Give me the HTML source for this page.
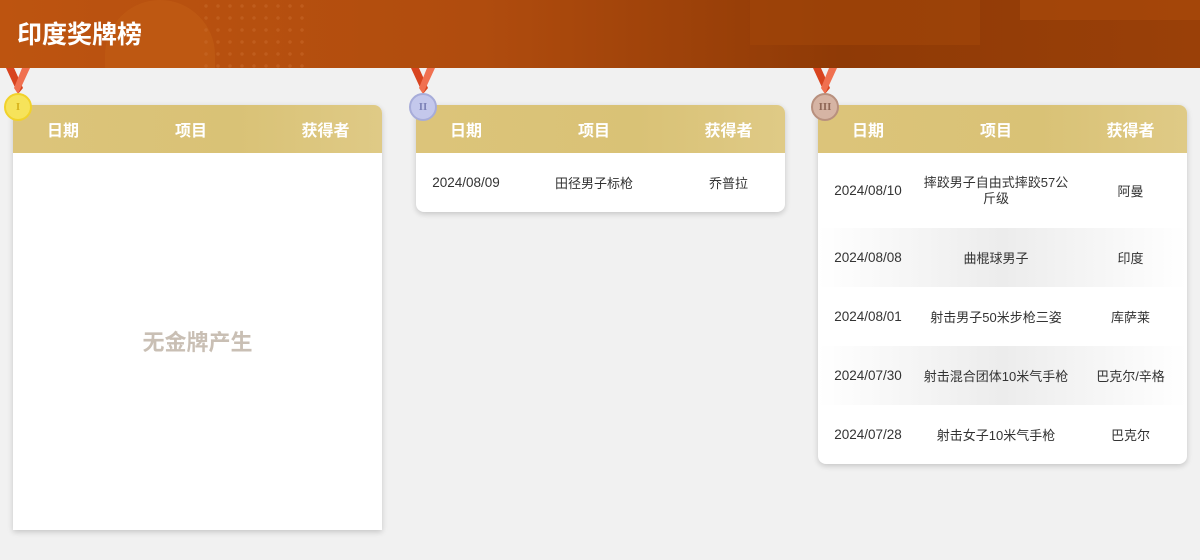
<!DOCTYPE html>
<html><head><meta charset="utf-8"><style>
*{margin:0;padding:0;box-sizing:border-box}
body{width:1200px;height:560px;background:#f1f1f1;font-family:"Liberation Sans","Noto Sans CJK SC",sans-serif;position:relative;overflow:hidden}
.top{position:absolute;left:0;top:0;width:1200px;height:68px;background:linear-gradient(90deg,#bd5410 0%,#b04c0e 40%,#8f3a06 70%,#9a4008 100%);overflow:hidden}
.top h1{position:absolute;left:17px;top:15px;color:#fff;font-size:25px;font-weight:bold;letter-spacing:0px}
.shape{position:absolute}
.card{position:absolute;width:369px;background:#fff;border-radius:8px;box-shadow:0 2px 6px rgba(0,0,0,.18);z-index:1}
.hd{height:48px;background:linear-gradient(90deg,#dcc47a,#d9c276 60%,#dfca86);border-radius:8px 8px 0 0;display:flex;align-items:center;color:#fff;font-weight:bold;font-size:16px}
.c1{width:100px;text-align:center}.c2{width:156px;text-align:center}.c3{width:113px;text-align:center}
.row{display:flex;align-items:center;height:59px;font-size:13.5px;color:#333}
.row .c2,.row .c3{font-size:13px}
.row.alt{background:linear-gradient(90deg,#fff,#ececec 50%,#fff)}
.medal{position:absolute;width:28px;height:28px;border-radius:50%;font-size:11px;font-weight:bold;text-align:center;line-height:24px;font-family:"Liberation Serif",serif;z-index:3}
.rib{position:absolute;top:68px;width:26px;height:30px;z-index:2}
</style></head><body>
<div class="top">
<div class="shape" style="left:105px;top:0;width:110px;height:120px;border-radius:55px;background:#c25d14;opacity:.6"></div>
<div class="shape" style="left:200px;top:0;width:110px;height:68px;background:radial-gradient(circle,#c86a2a 1.5px,transparent 2px) 0 0/12px 12px;opacity:.5"></div>
<div class="shape" style="left:750px;top:0;width:230px;height:45px;background:#a04508;opacity:.7"></div>
<div class="shape" style="left:1020px;top:0;width:180px;height:20px;background:#a8480a;opacity:.7"></div>
<h1>印度奖牌榜</h1></div>

<svg class="rib" style="left:5px" viewBox="0 0 26 30"><path d="M1 0 L13 26 L18 20 L9 0Z" fill="#d8441f"/><path d="M25 0 L13 26 L9 20 L17 0Z" fill="#f07050"/></svg>
<div class="medal" style="left:4px;top:93px;background:#f6e35a;border:2px solid #f1d22a;color:#d7b21a">I</div>
<svg class="rib" style="left:410px" viewBox="0 0 26 30"><path d="M1 0 L13 26 L18 20 L9 0Z" fill="#d8441f"/><path d="M25 0 L13 26 L9 20 L17 0Z" fill="#f07050"/></svg>
<div class="medal" style="left:409px;top:93px;background:#c4c8ec;border:2px solid #a7acd9;color:#7d82b8">II</div>
<svg class="rib" style="left:812px" viewBox="0 0 26 30"><path d="M1 0 L13 26 L18 20 L9 0Z" fill="#d8441f"/><path d="M25 0 L13 26 L9 20 L17 0Z" fill="#f07050"/></svg>
<div class="medal" style="left:811px;top:93px;background:#d6b4a4;border:2px solid #b8907e;color:#8e6656">III</div>

<div class="card" style="left:13px;top:105px;height:425px;border-radius:8px 8px 0 0">
<div class="hd"><div class="c1">日期</div><div class="c2">项目</div><div class="c3">获得者</div></div>
<div style="text-align:center;margin-top:172px;font-size:22px;font-weight:bold;color:#c9bfb4">无金牌产生</div>
</div>

<div class="card" style="left:416px;top:105px;height:107px">
<div class="hd"><div class="c1">日期</div><div class="c2">项目</div><div class="c3">获得者</div></div>
<div class="row"><div class="c1">2024/08/09</div><div class="c2">田径男子标枪</div><div class="c3">乔普拉</div></div>
</div>

<div class="card" style="left:818px;top:105px;height:359px">
<div class="hd"><div class="c1">日期</div><div class="c2">项目</div><div class="c3">获得者</div></div>
<div class="row" style="height:75px"><div class="c1">2024/08/10</div><div class="c2" style="line-height:16px">摔跤男子自由式摔跤57公斤级</div><div class="c3">阿曼</div></div>
<div class="row alt"><div class="c1">2024/08/08</div><div class="c2">曲棍球男子</div><div class="c3">印度</div></div>
<div class="row"><div class="c1">2024/08/01</div><div class="c2">射击男子50米步枪三姿</div><div class="c3">库萨莱</div></div>
<div class="row alt"><div class="c1">2024/07/30</div><div class="c2" style="white-space:nowrap">射击混合团体10米气手枪</div><div class="c3">巴克尔/辛格</div></div>
<div class="row"><div class="c1">2024/07/28</div><div class="c2">射击女子10米气手枪</div><div class="c3">巴克尔</div></div>
</div>
</body></html>
